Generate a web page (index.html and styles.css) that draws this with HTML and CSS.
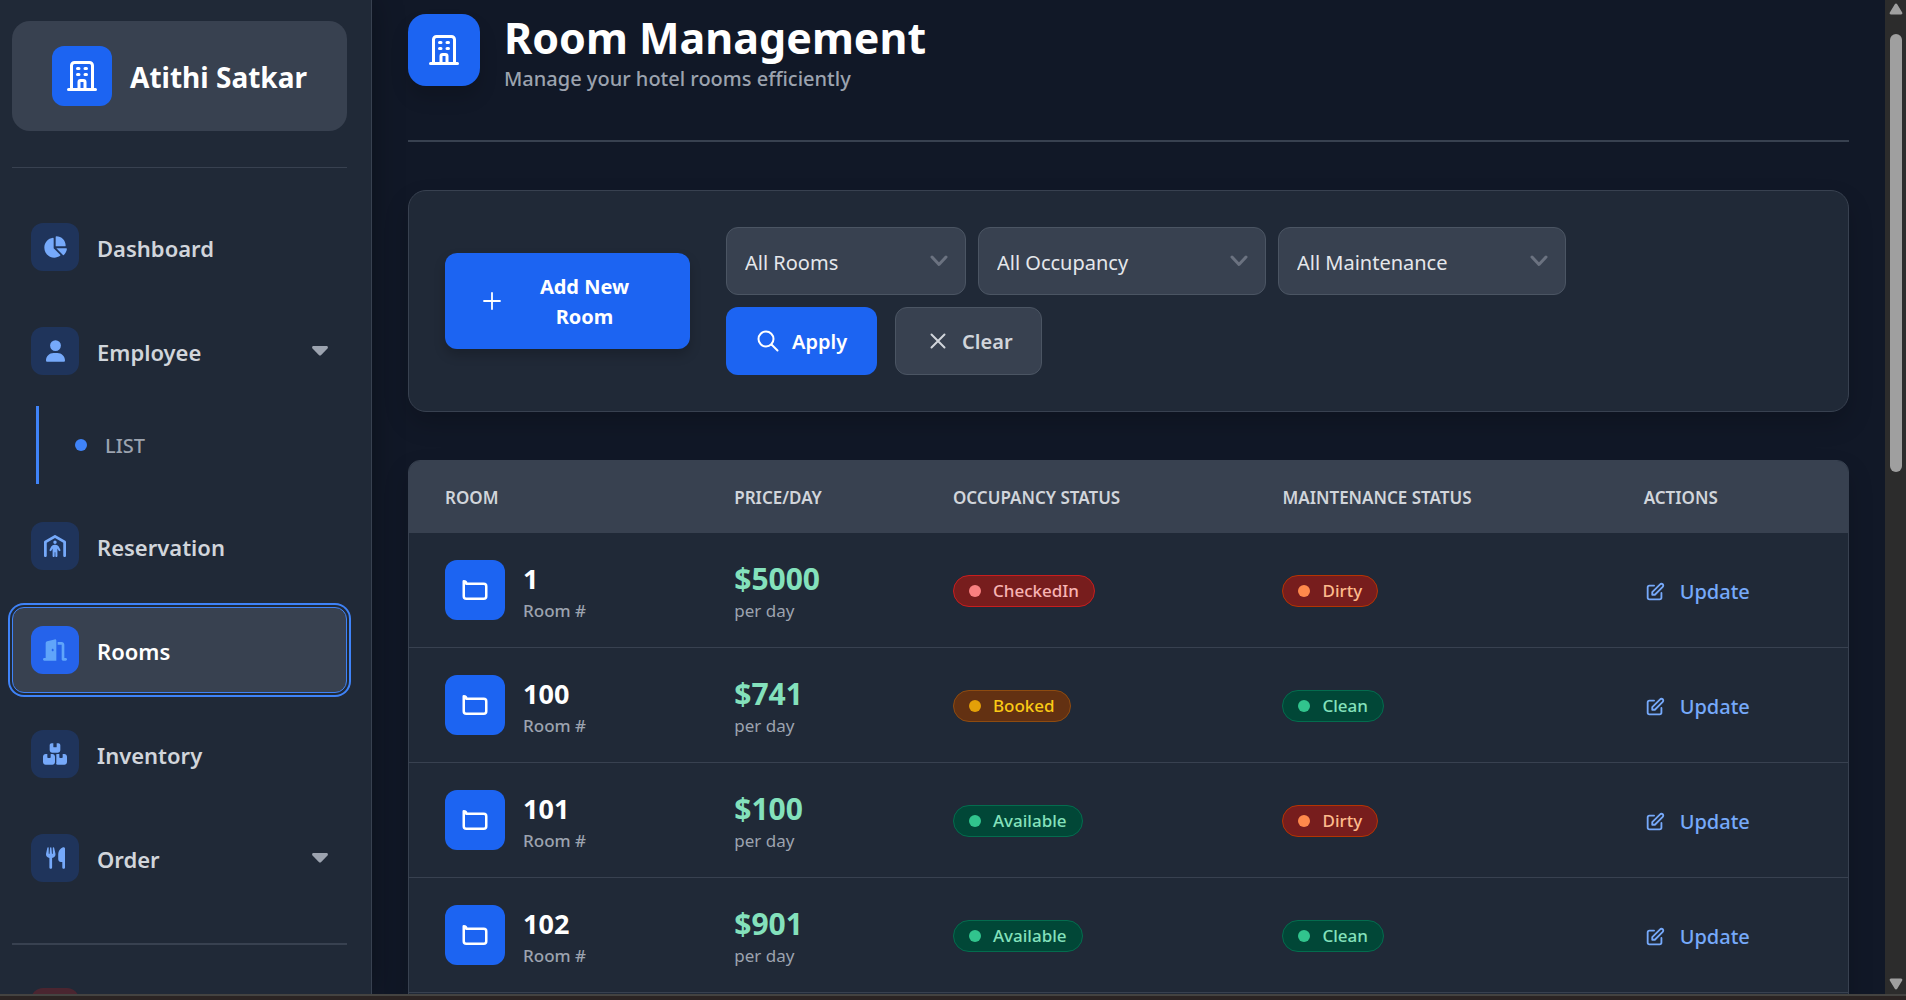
FILE: index.html
```html
<!DOCTYPE html>
<html lang="en">
<head>
<meta charset="utf-8">
<meta name="viewport" content="width=device-width, initial-scale=1">
<title>Room Management</title>
<link rel="stylesheet" href="styles.css">
</head>
<body>
<svg class="sprite" aria-hidden="true">
  <symbol id="i-building" viewBox="0 0 24 24"><path d="M19 21V5a2 2 0 00-2-2H7a2 2 0 00-2 2v16m14 0h2m-2 0h-5m-9 0H3m2 0h5M9 7h1m-1 4h1m4-4h1m-1 4h1m-5 10v-5a1 1 0 011-1h2a1 1 0 011 1v5m-4 0h4"/></symbol>
  <symbol id="i-room" viewBox="0 0 24 24"><path d="M3 7v10a2 2 0 002 2h14a2 2 0 002-2V9a2 2 0 00-2-2H5a2 2 0 00-2-2z"/></symbol>
  <symbol id="i-edit" viewBox="0 0 24 24"><path d="M11 5H6a2 2 0 00-2 2v11a2 2 0 002 2h11a2 2 0 002-2v-5m-1.414-9.414a2 2 0 112.828 2.828L11.828 15H9v-2.828l8.586-8.586z"/></symbol>
  <symbol id="i-chevron" viewBox="0 0 18 12"><path d="M2 2l7 7.500 7-7.500"/></symbol>
  <symbol id="i-caret" viewBox="0 0 16 10"><path d="M1.500 0h13c1.300 0 1.900 1.400 1 2.400L9.200 8.900c-.7.700-1.700.700-2.400 0L.5 2.400C-.4 1.400.2 0 1.500 0z"/></symbol>
</svg>

<div class="app">
  <aside class="sidebar">
    <a class="brand" href="#">
      <span class="tile tile-brand"><svg class="stroke" width="36" height="36"><use href="#i-building"/></svg></span>
      <span class="brand-name">Atithi Satkar</span>
    </a>
    <nav class="nav">
      <a class="nav-item" href="#">
        <span class="nav-icon"><svg width="24" height="22" viewBox="0 0 576 512"><path d="M304 240V16.600c0-9 7-16.600 16-16.600C443.700 0 544 100.300 544 224c0 9-7.600 16-16.600 16H304zM32 272C32 150.700 122.100 50.300 239 34.300c9.200-1.300 17 6.100 17 15.400V288L412.500 444.500c6.700 6.700 6.200 17.700-1.500 23.100C371.800 495.600 323.800 512 272 512C139.500 512 32 404.600 32 272zm526.400 16c9.300 0 16.600 7.800 15.400 17c-7.700 55.900-34.600 105.600-73.900 142.300c-6 5.600-15.400 5.200-21.200-.7L320 288H558.400z"/></svg></span>
        <span class="nav-label">Dashboard</span>
      </a>
      <button class="nav-item" type="button" aria-expanded="true">
        <span class="nav-icon"><svg width="19" height="22" viewBox="0 0 448 512"><path d="M224 256A128 128 0 1 0 224 0a128 128 0 1 0 0 256zm-45.700 48C79.800 304 0 383.800 0 482.300C0 498.700 13.300 512 29.700 512H418.300c16.400 0 29.700-13.300 29.700-29.700C448 383.800 368.200 304 269.700 304H178.300z"/></svg></span>
        <span class="nav-label">Employee</span>
        <svg class="caret" width="16" height="10"><use href="#i-caret"/></svg>
      </button>
      <div class="subnav">
        <a class="subnav-item" href="#"><span class="subnav-dot"></span><span class="nav-label">LIST</span></a>
      </div>
      <a class="nav-item" href="#">
        <span class="nav-icon"><svg width="22" height="22" viewBox="0 0 512 512"><path d="M271.900 4.200c-9.800-5.600-21.900-5.600-31.800 0l-224 128C6.200 137.900 0 148.500 0 160V480c0 17.700 14.300 32 32 32s32-14.300 32-32V178.600L256 68.900 448 178.600V480c0 17.700 14.300 32 32 32s32-14.300 32-32V160c0-11.500-6.200-22.100-16.100-27.800l-224-128zM256 208a40 40 0 1 0 0-80 40 40 0 1 0 0 80zm-8 280V400h16v88c0 13.300 10.700 24 24 24s24-10.700 24-24V313.500l26.900 49.900c6.300 11.700 20.800 16 32.500 9.800s16-20.800 9.800-32.500l-37.900-70.300c-15.300-28.500-45.100-46.300-77.500-46.300H246.200c-32.400 0-62.100 17.800-77.500 46.300l-37.900 70.300c-6.300 11.700-1.900 26.200 9.800 32.500s26.200 1.900 32.500-9.800L200 313.500V488c0 13.300 10.700 24 24 24s24-10.700 24-24z"/></svg></span>
        <span class="nav-label">Reservation</span>
      </a>
      <a class="nav-item is-active" href="#" aria-current="page">
        <span class="nav-icon"><svg width="24" height="22" viewBox="0 0 576 512"><path d="M320 32c0-9.900-4.500-19.200-12.300-25.200S289.800-1.400 280.200 1l-179.900 45C79 51.300 64 70.500 64 92.500V448H32c-17.700 0-32 14.300-32 32s14.300 32 32 32H96 288h32V480 32zM256 256c0 17.700-10.700 32-24 32s-24-14.300-24-32s10.700-32 24-32s24 14.300 24 32zm96-128h96V480c0 17.700 14.300 32 32 32h64c17.700 0 32-14.300 32-32s-14.300-32-32-32H512V128c0-35.300-28.700-64-64-64H352v64z"/></svg></span>
        <span class="nav-label">Rooms</span>
      </a>
      <a class="nav-item" href="#">
        <span class="nav-icon"><svg width="24" height="22" viewBox="0 0 576 512"><path d="M248 0H208c-26.500 0-48 21.500-48 48V160c0 35.300 28.700 64 64 64H352c35.300 0 64-28.700 64-64V48c0-26.500-21.500-48-48-48H328V80c0 8.800-7.200 16-16 16H264c-8.800 0-16-7.200-16-16V0zM64 256c-35.300 0-64 28.700-64 64V448c0 35.300 28.700 64 64 64H224c35.300 0 64-28.700 64-64V320c0-35.300-28.700-64-64-64H184v80c0 8.800-7.200 16-16 16H120c-8.800 0-16-7.200-16-16V256H64zM352 512H512c35.300 0 64-28.700 64-64V320c0-35.300-28.700-64-64-64H472v80c0 8.800-7.200 16-16 16H408c-8.800 0-16-7.200-16-16V256H352c-15 0-28.800 5.100-39.700 13.800c4.900 10.400 7.700 22 7.700 34.200V464c0 12.200-2.800 23.800-7.700 34.200C323.200 506.900 337 512 352 512z"/></svg></span>
        <span class="nav-label">Inventory</span>
      </a>
      <button class="nav-item" type="button" aria-expanded="false">
        <span class="nav-icon"><svg width="19" height="22" viewBox="0 0 448 512"><path d="M416 0C400 0 288 32 288 176V288c0 35.300 28.700 64 64 64h32V480c0 17.700 14.300 32 32 32s32-14.300 32-32V352 240 32c0-17.700-14.300-32-32-32zM64 16C64 7.800 57.900 1 49.700 .1S34.200 4.600 32.400 12.500L2.100 148.800C.7 155.100 0 161.500 0 167.900c0 45.900 35.100 83.600 80 87.700V480c0 17.700 14.300 32 32 32s32-14.300 32-32V255.600c44.900-4.100 80-41.800 80-87.700c0-6.400-.7-12.800-2.100-19.100L191.600 12.500c-1.800-8-9.300-13.300-17.400-12.400S160 7.800 160 16V150.200c0 5.400-4.400 9.800-9.800 9.800c-5.100 0-9.300-3.900-9.800-9L127.900 14.600C127.200 6.300 120.300 0 112 0s-15.200 6.300-15.900 14.600L83.700 151c-.5 5.100-4.700 9-9.800 9c-5.400 0-9.800-4.400-9.800-9.800V16z"/></svg></span>
        <span class="nav-label">Order</span>
        <svg class="caret" width="16" height="10"><use href="#i-caret"/></svg>
      </button>
    </nav>
    <div class="sidebar-foot">
      <button class="nav-item" type="button" aria-label="Log out"><span class="nav-icon nav-icon-danger"></span></button>
    </div>
  </aside>

  <main class="main">
    <header class="page-head">
      <span class="tile tile-page"><svg class="stroke" width="36" height="36"><use href="#i-building"/></svg></span>
      <div>
        <h1 class="page-title">Room Management</h1>
        <p class="page-sub">Manage your hotel rooms efficiently</p>
      </div>
    </header>

    <section class="card toolbar">
      <button class="btn btn-primary btn-add" type="button">
        <svg class="stroke thin" width="22" height="22" viewBox="0 0 22 22"><path d="M11 3v16M3 11h16"/></svg>
        <span class="btn-add-label">Add New Room</span>
      </button>
      <form class="filters">
        <div class="select select-sm">
          <select aria-label="Rooms"><option>All Rooms</option></select>
          <svg class="chevron" width="18" height="12"><use href="#i-chevron"/></svg>
        </div>
        <div class="select">
          <select aria-label="Occupancy"><option>All Occupancy</option></select>
          <svg class="chevron" width="18" height="12"><use href="#i-chevron"/></svg>
        </div>
        <div class="select">
          <select aria-label="Maintenance"><option>All Maintenance</option></select>
          <svg class="chevron" width="18" height="12"><use href="#i-chevron"/></svg>
        </div>
        <div class="filter-actions">
          <button class="btn btn-primary" type="button">
            <svg class="stroke" width="24" height="24" viewBox="0 0 24 24"><circle cx="10" cy="10" r="7.500"/><path d="M15.500 15.500l6 6"/></svg>
            <span class="btn-label">Apply</span>
          </button>
          <button class="btn btn-muted" type="reset">
            <svg class="stroke" width="24" height="24" viewBox="0 0 24 24"><path d="M5.500 5.500l13 13M18.500 5.500l-13 13"/></svg>
            <span class="btn-label">Clear</span>
          </button>
        </div>
      </form>
    </section>

    <section class="card table-card">
      <table class="rooms">
        <colgroup><col class="c-room"><col class="c-price"><col class="c-occ"><col class="c-maint"><col></colgroup>
        <thead>
          <tr><th scope="col">ROOM</th><th scope="col">PRICE/DAY</th><th scope="col">OCCUPANCY STATUS</th><th scope="col">MAINTENANCE STATUS</th><th scope="col">ACTIONS</th></tr>
        </thead>
        <tbody>
          <tr>
            <td><div class="room"><span class="tile"><svg class="stroke" width="30" height="30"><use href="#i-room"/></svg></span><div class="pair"><div class="number">1</div><div class="note note-strong">Room #</div></div></div></td>
            <td><div class="pair"><div class="price">$5000</div><div class="note">per day</div></div></td>
            <td><span class="badge badge-red">CheckedIn</span></td>
            <td><span class="badge badge-orange">Dirty</span></td>
            <td><a class="update" href="#"><svg class="stroke" width="22" height="22"><use href="#i-edit"/></svg>Update</a></td>
          </tr>
          <tr>
            <td><div class="room"><span class="tile"><svg class="stroke" width="30" height="30"><use href="#i-room"/></svg></span><div class="pair"><div class="number">100</div><div class="note note-strong">Room #</div></div></div></td>
            <td><div class="pair"><div class="price">$741</div><div class="note">per day</div></div></td>
            <td><span class="badge badge-yellow">Booked</span></td>
            <td><span class="badge badge-green">Clean</span></td>
            <td><a class="update" href="#"><svg class="stroke" width="22" height="22"><use href="#i-edit"/></svg>Update</a></td>
          </tr>
          <tr>
            <td><div class="room"><span class="tile"><svg class="stroke" width="30" height="30"><use href="#i-room"/></svg></span><div class="pair"><div class="number">101</div><div class="note note-strong">Room #</div></div></div></td>
            <td><div class="pair"><div class="price">$100</div><div class="note">per day</div></div></td>
            <td><span class="badge badge-green">Available</span></td>
            <td><span class="badge badge-orange">Dirty</span></td>
            <td><a class="update" href="#"><svg class="stroke" width="22" height="22"><use href="#i-edit"/></svg>Update</a></td>
          </tr>
          <tr>
            <td><div class="room"><span class="tile"><svg class="stroke" width="30" height="30"><use href="#i-room"/></svg></span><div class="pair"><div class="number">102</div><div class="note note-strong">Room #</div></div></div></td>
            <td><div class="pair"><div class="price">$901</div><div class="note">per day</div></div></td>
            <td><span class="badge badge-green">Available</span></td>
            <td><span class="badge badge-green">Clean</span></td>
            <td><a class="update" href="#"><svg class="stroke" width="22" height="22"><use href="#i-edit"/></svg>Update</a></td>
          </tr>
        </tbody>
      </table>
    </section>
  </main>

  <div class="scrollbar" aria-hidden="true">
    <svg width="14" height="12" viewBox="0 0 14 12"><path d="M8.200 1.200l5 8.300c.5 1-.1 2-1.200 2H2c-1.100 0-1.700-1-1.200-2l5-8.300c.6-1 1.800-1 2.400 0z"/></svg>
    <div class="scroll-track"><div class="scroll-thumb"></div></div>
    <svg width="14" height="12" viewBox="0 0 14 12"><path d="M8.200 10.800l5-8.300c.5-1-.1-2-1.200-2H2c-1.100 0-1.700 1-1.200 2l5 8.300c.6 1 1.800 1 2.400 0z"/></svg>
  </div>
</div>
<div class="window-edge"></div>
</body>
</html>
```
FILE: styles.css
```css
:root {
  --gray-900: #111827;
  --gray-800: #202937;
  --gray-700: #384150;
  --gray-600: #4b5563;
  --gray-400: #9ca3af;
  --gray-300: #d1d5db;
  --blue: #1c64f2;
  --blue-light: #76a9fa;
  --blue-ring: #3f83f8;
}

*, *::before, *::after { box-sizing: border-box; }

body {
  margin: 0;
  height: 100vh;
  display: flex;
  flex-direction: column;
  overflow: hidden;
  background: var(--gray-900);
  color: #fff;
  font-family: "Noto Sans", "Open Sans", sans-serif;
  font-size: 20px;
  line-height: 30px;
}

button, select { font: inherit; color: inherit; cursor: pointer; }
a { color: inherit; text-decoration: none; }
svg { flex: none; fill: currentColor; }
.stroke { fill: none; stroke: currentColor; stroke-width: 2; stroke-linecap: round; stroke-linejoin: round; }
.thin { stroke-width: 1.8; }
.sprite { position: absolute; width: 0; height: 0; }

.app { flex: 1; min-height: 0; display: flex; overflow: hidden; }

.window-edge {
  flex: none;
  height: 6px;
  border-top: 2px solid #444341;
  background: #2b2423;
}

/* Sidebar */
.sidebar {
  flex: none;
  width: 372px;
  padding: 21px 24px 0 12px;
  overflow: hidden;
  background: var(--gray-800);
  border-right: 1px solid var(--gray-700);
  box-shadow: 0 0 30px rgba(0, 0, 0, .3);
}

.brand {
  display: flex;
  align-items: center;
  justify-content: center;
  gap: 18px;
  height: 110px;
  border-radius: 18px;
  background: var(--gray-700);
}
.brand-name { padding-top: 2px; font-size: 28px; line-height: 36px; font-weight: 700; }

.tile {
  flex: none;
  display: grid;
  place-items: center;
  width: 60px;
  height: 60px;
  border-radius: 12px;
  background: var(--blue);
  color: #fff;
}

.nav {
  display: flex;
  flex-direction: column;
  gap: 18px;
  margin-top: 36px;
  padding: 36px 0 42px;
  border-top: 1px solid var(--gray-700);
}

.nav-item {
  display: flex;
  align-items: center;
  gap: 18px;
  width: 100%;
  padding: 18px;
  border: 1px solid transparent;
  border-radius: 12px;
  background: none;
  color: var(--gray-300);
  font-size: 22px;
  font-weight: 600;
  text-align: left;
}
.nav-item.is-active {
  background: var(--gray-700);
  border-color: var(--blue-ring);
  color: #fff;
  box-shadow: 0 0 0 2px var(--gray-800), 0 0 0 4px var(--blue-ring);
}
.nav-label { padding-top: 2px; }
.nav-icon {
  flex: none;
  display: grid;
  place-items: center;
  width: 48px;
  height: 48px;
  border-radius: 12px;
  background: #1f345b;
  color: var(--blue-light);
}
.is-active .nav-icon { background: #2563eb; color: #60a5fa; }
.nav-icon-danger { background: #4a2530; }
.caret { margin-left: auto; color: var(--gray-400); }

.subnav {
  margin: -6px 0 1px 24px;
  padding: 23px 0 23px 36px;
  border-left: 3px solid var(--blue-ring);
}
.subnav-item {
  display: flex;
  align-items: center;
  gap: 18px;
  color: var(--gray-400);
  font-weight: 500;
}
.subnav-dot { width: 12px; height: 12px; border-radius: 50%; background: var(--blue-ring); }

.sidebar-foot { padding-top: 24px; border-top: 2px solid var(--gray-700); }

/* Page */
.main { flex: 1; min-width: 0; padding: 14px 36px 0; overflow: hidden; }

.page-head {
  display: flex;
  gap: 24px;
  padding-bottom: 46px;
  border-bottom: 2px solid var(--gray-700);
}
.tile-page {
  width: 72px;
  height: 72px;
  border-radius: 18px;
  box-shadow: 0 12px 18px rgba(0, 0, 0, .15);
}
.page-title { margin: 0 0 2px; font-size: 43px; line-height: 48px; font-weight: 700; }
.page-sub { margin: 0; color: var(--gray-400); font-weight: 500; }

.card {
  margin-top: 48px;
  border: 1px solid var(--gray-700);
  border-radius: 18px;
  background: var(--gray-800);
  box-shadow: 0 12px 24px rgba(0, 0, 0, .18);
}

.toolbar { display: flex; align-items: center; gap: 36px; padding: 36px; }

.btn {
  display: inline-flex;
  align-items: center;
  gap: 12px;
  height: 68px;
  padding: 0 30px;
  border: 0;
  border-radius: 12px;
  font-weight: 600;
}
.btn-label { padding-top: 2px; }
.btn-primary { background: var(--blue); color: #fff; }
.btn-muted { padding: 0 28px 0 30px; border: 1px solid var(--gray-600); background: var(--gray-700); color: var(--gray-300); }
.btn-add {
  flex: none;
  width: 245px;
  height: 96px;
  padding: 0 36px;
  font-weight: 700;
  box-shadow: 0 6px 12px rgba(0, 0, 0, .2);
}
.btn-add-label { flex: 1; padding-top: 2px; }

.filters { display: flex; flex-wrap: wrap; gap: 12px; }
.filter-actions { display: flex; gap: 18px; }

.select { position: relative; width: 288px; }
.select-sm { width: 240px; }
.select select {
  appearance: none;
  display: block;
  width: 100%;
  height: 68px;
  padding: 4px 48px 0 18px;
  border: 1px solid var(--gray-600);
  border-radius: 12px;
  background: var(--gray-700);
  color: #e5e7eb;
}
.chevron {
  position: absolute;
  right: 18px;
  top: 28px;
  fill: none;
  stroke: #6b7280;
  stroke-width: 3;
  stroke-linecap: round;
  stroke-linejoin: round;
  pointer-events: none;
}

/* Rooms table */
.table-card { padding-bottom: 36px; border-radius: 12px; overflow: hidden; }
.rooms { width: 100%; table-layout: fixed; border-collapse: separate; border-spacing: 0; }
.c-room { width: 20.1%; }
.c-price { width: 15.2%; }
.c-occ { width: 22.9%; }
.c-maint { width: 25.1%; }

.rooms th {
  height: 72px;
  padding: 2px 0 0 36px;
  background: var(--gray-700);
  color: var(--gray-300);
  font-size: 17px;
  font-weight: 600;
  text-align: left;
}
.rooms td {
  height: 115px;
  padding: 0 0 0 36px;
  border-bottom: 1px solid var(--gray-700);
  vertical-align: middle;
}
.rooms td:nth-child(n+3) { padding-top: 2px; }

.room { display: flex; align-items: center; gap: 18px; }
.pair { padding-top: 6px; }
.number { font-size: 27px; line-height: 36px; font-weight: 700; }
.price { font-size: 30px; line-height: 36px; font-weight: 700; color: #84e1bc; }
.note { font-size: 17px; line-height: 28px; color: var(--gray-400); }
.note-strong { font-weight: 500; }

.badge {
  display: inline-flex;
  align-items: center;
  gap: 12px;
  height: 32px;
  padding: 0 15px;
  border: 1px solid;
  border-radius: 16px;
  font-size: 17px;
  font-weight: 500;
  vertical-align: middle;
}
.badge::before { content: ""; width: 12px; height: 12px; border-radius: 50%; background: var(--dot); }
.badge-red { --dot: #f98080; background: #771d1d; border-color: #c81e1e; color: #f8b4b4; }
.badge-orange { --dot: #ff8a4c; background: #771d1d; border-color: #b43403; color: #fdba8c; }
.badge-yellow { --dot: #e3a008; background: #633112; border-color: #8e4b10; color: #faca15; }
.badge-green { --dot: #31c48d; background: #014737; border-color: #046c4e; color: #84e1bc; }

.update {
  display: inline-flex;
  align-items: center;
  gap: 14px;
  color: var(--blue-light);
  font-weight: 500;
  vertical-align: middle;
}

/* Scroll bar */
.scrollbar {
  flex: none;
  width: 21px;
  display: flex;
  flex-direction: column;
  align-items: center;
  padding: 3px 0 4px;
  background: #2c2c2c;
  color: #9f9f9f;
}
.scroll-track { flex: 1; padding: 19px 0 12px; }
.scroll-thumb { width: 12px; height: 47%; min-height: 24px; border-radius: 6px; background: #9f9f9f; }
```
